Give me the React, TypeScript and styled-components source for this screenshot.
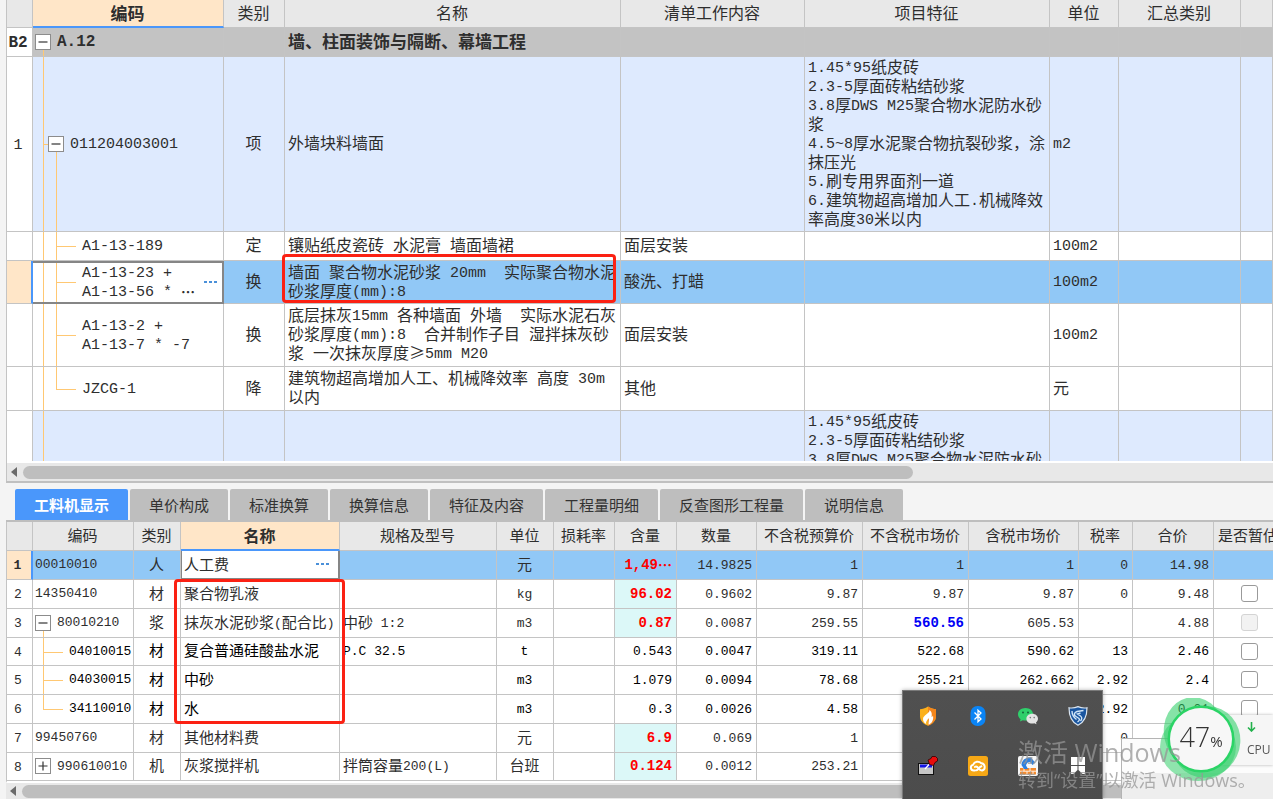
import React from "react";
import styled, { createGlobalStyle, css } from "styled-components";

const CJK = '"Noto Sans CJK SC", sans-serif';
const MONO = '"Liberation Mono", "Noto Sans CJK SC", monospace';
const LINE = "#c4c4c4";
const GUIDE = "#ffc873";
const BLUE = "#4a97fb";
const PICK = "#91c8f6";
const PEACH = "#ffe6c8";
const EDGE = "#868686";

const GlobalStyle = createGlobalStyle`
  * { box-sizing: border-box; }
  body { margin: 0; background: #f4f4f4; color: #2e2e2e; font-family: ${CJK}; overflow: hidden; }
  button, input { font: inherit; color: inherit; margin: 0; }
`;

const Screen = styled.main`
  display: flex;
  flex-direction: column;
  height: 100vh;
  overflow: hidden;
  padding-left: 6px;
`;

const UpperPane = styled.section`
  position: relative;
  flex: 1 1 0;
  min-height: 0;
  display: flex;
  flex-direction: column;
  border-left: 1px solid ${LINE};
`;

const LowerPane = styled.section`
  position: relative;
  flex: none;
  border-top: 2px solid #c0c0c0;
`;

const Clip = styled.div<{ $fill?: boolean }>`
  overflow: hidden;
  background: #fff;
  border-bottom: 2px solid #fff;
  ${(p) => (p.$fill ? "flex: 1 1 0; min-height: 0;" : "border-left: 1px solid " + LINE + ";")}
`;

const Grid = styled.table<{ $size: number; $line: number }>`
  border-collapse: separate;
  border-spacing: 0;
  table-layout: fixed;
  width: 100%;
  font-size: ${(p) => p.$size}px;
  line-height: ${(p) => p.$line}px;
`;

const UpperGrid = styled(Grid)`
  min-width: 1266px;
`;

const LowerGrid = styled(Grid)`
  min-width: 1277px;
  tbody tr {
    height: 29px;
  }
  tbody tr:nth-child(4n) {
    height: 28px;
  }
`;

const Head = styled.th<{ $on?: boolean; $tall?: boolean }>`
  height: ${(p) => (p.$tall ? 29 : 28)}px;
  padding: 0 1px 2px 0;
  background: ${(p) => (p.$on ? PEACH : "#e8e8e8")};
  border-right: 1px solid ${LINE};
  border-bottom: ${(p) => (p.$on ? "2px solid " + BLUE : "1px solid " + LINE)};
  font-weight: ${(p) => (p.$on ? 700 : 400)};
  ${(p) => p.$on && `font-size: ${p.$tall ? 16 : 17}px;`}
  white-space: nowrap;
  overflow: hidden;
`;

type CellProps = {
  $align?: "left" | "center" | "right";
  $bg?: string;
  $bold?: boolean;
  $color?: string;
};

const Cell = styled.td<CellProps>`
  padding: 0 4px 3px 3px;
  text-align: ${(p) => p.$align || "left"};
  background-color: ${(p) => p.$bg || "transparent"};
  border-right: 1px solid ${LINE};
  border-bottom: 1px solid ${LINE};
  white-space: pre;
  ${(p) => p.$bold && "font-weight: 700;"}
  ${(p) => p.$color && `color: ${p.$color};`}
`;

const GroupCell = styled(Cell)`
  font-size: 17px;
  font-weight: 700;
`;

const IndexCell = styled(Cell)<{ $marked?: boolean }>`
  padding: 0 3px 2px 0;
  text-align: center;
  background-color: ${(p) => (p.$marked ? PEACH : "#fff")};
  ${(p) => p.$marked && `border-right: 2px solid ${BLUE};`}
`;

const EditCell = styled(Cell)`
  background-color: #fff;
  border-color: ${EDGE};
  box-shadow: inset 1px -1px 0 ${EDGE}, inset -1px 0 0 ${EDGE};
`;

/* Tree guides are painted as cell backgrounds so they follow the row height. */
const guide = (parts: string[]) => css`
  background-image: ${parts.map(() => `linear-gradient(${GUIDE}, ${GUIDE})`).join(", ")};
  background-position: ${parts.map((p) => p.split("/")[0]).join(", ")};
  background-size: ${parts.map((p) => p.split("/")[1]).join(", ")};
  background-repeat: no-repeat;
  background-origin: border-box;
`;

const guides = {
  none: [] as string[],
  stem: ["10px 100%/1px 50%"],
  section: ["10px 0/1px 100%", "10px 50%/6px 1px", "23px 100%/1px 50%"],
  child: ["10px 0/1px 100%", "23px 0/1px 100%", "23px 50%/20px 1px"],
  last: ["10px 0/1px 100%", "23px 0/1px 50%", "23px 50%/20px 1px"],
  pass: ["10px 0/1px 100%"],
  leaf: ["10px 0/1px 100%", "10px 50%/20px 1px"],
  leafEnd: ["10px 0/1px 50%", "10px 50%/20px 1px"],
};
type GuideKind = keyof typeof guides;

const TreeCell = styled(Cell)<{ $guide: GuideKind; $indent: number }>`
  padding: 0 0 1px ${(p) => p.$indent}px;
  ${(p) => guides[p.$guide].length > 0 && guide(guides[p.$guide])}
`;

const TreeEdit = styled(TreeCell)`
  background-color: #fff;
  border-color: ${EDGE};
  box-shadow: inset 0 2px 0 ${EDGE}, inset -1px -1px 0 ${EDGE};
`;

const Line = styled.div`
  display: flex;
  align-items: center;
`;

const CodeLines = styled.div`
  padding-bottom: 2px;
`;

const Ellipsis = styled.span`
  font-weight: 700;
  font-size: 14px;
  line-height: 1;
`;

const Toggle = styled.button`
  flex: none;
  display: grid;
  place-items: center;
  width: 16px;
  height: 16px;
  margin-right: 6px;
  padding: 0;
  border: 1px solid #8c8c8c;
  background: #fff;
`;

const Latin = styled.span<{ $size: number }>`
  font-family: ${MONO};
  font-size: ${(p) => p.$size}px;
  line-height: 1;
  vertical-align: 1px;
`;

const MoreButton = styled.button`
  display: flex;
  gap: 2px;
  margin-left: auto;
  margin-right: 6px;
  padding: 4px 0;
  border: 0;
  background: none;
`;

const Dot = styled.i`
  width: 3px;
  height: 2px;
  background: #4a90d9;
`;

const Tick = styled.input`
  appearance: none;
  display: block;
  width: 17px;
  height: 17px;
  margin: 2px 0 0 24px;
  border: 1px solid #9a9a9a;
  border-radius: 3px;
  background: #fff;
  &:disabled {
    border-color: #d4d4d4;
    background: #f2f2f2;
  }
`;

const Mark = styled.div`
  position: absolute;
  border: 3px solid #fb2113;
  border-radius: 4px;
  pointer-events: none;
`;

const UpperMark = styled(Mark)`
  left: 275px;
  top: 254px;
  width: 334px;
  height: 49px;
`;

const LowerMark = styled(Mark)`
  left: 168px;
  top: 96px;
  width: 171px;
  height: 145px;
`;

const Track = styled.div<{ $tall?: boolean }>`
  display: flex;
  align-items: center;
  height: ${(p) => (p.$tall ? 18 : 16)}px;
  padding-left: 4px;
  gap: 6px;
  background: #e8e8e8;
`;

const Thumb = styled.div<{ $span: number }>`
  width: ${(p) => p.$span}%;
  height: 13px;
  border-radius: 7px;
  background: #bebebe;
`;

const Tabs = styled.div`
  display: flex;
  gap: 2px;
  padding: 6px 0 0 9px;
  border-bottom: 2px solid #bebebe;
`;

const Tab = styled.button<{ $on?: boolean }>`
  height: 31px;
  padding: 0 19px;
  border: 0;
  border-radius: 2px 2px 0 0;
  background: ${(p) => (p.$on ? BLUE : "#bebebe")};
  color: ${(p) => (p.$on ? "#fff" : "#333")};
  font-size: 15px;
  font-weight: ${(p) => (p.$on ? 700 : 400)};
  line-height: 20px;
  white-space: nowrap;
`;

const Tray = styled.div`
  position: fixed;
  right: 170px;
  bottom: 0;
  display: grid;
  grid-template-columns: repeat(4, 50px);
  grid-auto-rows: 50px;
  place-items: center;
  width: 201px;
  height: 109px;
  border: 1px solid #7a7a7a;
  border-bottom: 0;
  background: linear-gradient(#505050, #4c4c4c);
  box-shadow: 0 0 4px rgba(0, 0, 0, 0.3);
`;

const Popup = styled.div`
  position: fixed;
  right: 0;
  bottom: 0;
  width: 152px;
  height: 61px;
  border: 1px solid #b4b4b4;
  border-width: 1px 0 0 1px;
  background: linear-gradient(#fcfcfc 0 34px, #eeeeee 34px);
`;

const Meter = styled.div`
  position: fixed;
  right: 0;
  bottom: 34px;
  width: 72px;
  height: 50px;
  display: flex;
  flex-direction: column;
  align-items: flex-start;
  gap: 10px;
  padding: 7px 2px 0 46px;
  background: #f6f6f6;
  box-shadow: 0 0 3px rgba(0, 0, 0, 0.3);
  font: 12px/16px "Open Sans", sans-serif;
  color: #555;
`;

const Ball = styled.div`
  position: fixed;
  right: 31px;
  bottom: 19px;
  width: 82px;
  height: 82px;
`;

const BallText = styled.div`
  position: absolute;
  inset: 0;
  display: flex;
  align-items: baseline;
  justify-content: center;
  font: 300 27px/78px "Open Sans", sans-serif;
  color: #333;
`;

const Percent = styled.span`
  font-size: 15px;
  font-weight: 400;
`;

const Watermark = styled.div`
  position: fixed;
  right: 13px;
  bottom: 6px;
  width: 242px;
  color: rgba(150, 150, 150, 0.75);
  white-space: nowrap;
  pointer-events: none;
`;

const WatermarkTitle = styled.div`
  font: 25px/32px "Open Sans", "Noto Sans CJK SC", sans-serif;
`;

const WatermarkNote = styled.div`
  font: 18px/25px "Open Sans", "Noto Sans CJK SC", sans-serif;
`;

/** Chinese text with its half-width runs set in the grid's monospace face. */
function Mixed({ text, size = 15 }: { text: string; size?: number }) {
  return (
    <>
      {text.split(/([\x20-\x7e]+|⋯)/).map((run, i) =>
        run === "⋯" ? (
          <Ellipsis key={i}>{run}</Ellipsis>
        ) : i % 2 ? (
          <Latin key={i} $size={size}>
            {run}
          </Latin>
        ) : (
          run
        )
      )}
    </>
  );
}

function Expander({ open }: { open: boolean }) {
  return (
    <Toggle type="button" aria-label={open ? "折叠" : "展开"}>
      <svg width="10" height="10" viewBox="0 0 10 10" stroke="#333" strokeWidth="1.2">
        <path d={open ? "M0.5 5H9.5" : "M0.5 5H9.5M5 0.5V9.5"} />
      </svg>
    </Toggle>
  );
}

function More() {
  return (
    <MoreButton type="button" aria-label="更多">
      <Dot />
      <Dot />
      <Dot />
    </MoreButton>
  );
}

function ScrollBar({ span, tall }: { span: number; tall?: boolean }) {
  return (
    <Track $tall={tall}>
      <svg width="6" height="10" viewBox="0 0 6 10">
        <path d="M6 0V10L0 5Z" fill="#6b6b6b" />
      </svg>
      <Thumb $span={span} />
    </Track>
  );
}

type Item = {
  no?: string;
  code: string;
  kind: string;
  name: string;
  work?: string;
  feature?: string;
  unit?: string;
  height: number;
  guide: GuideKind;
  indent: number;
  tone?: "group" | "section" | "picked";
};

const feature =
  "1.45*95纸皮砖\n2.3-5厚面砖粘结砂浆\n3.8厚DWS M25聚合物水泥防水砂\n浆\n4.5~8厚水泥聚合物抗裂砂浆，涂\n抹压光\n5.刷专用界面剂一道\n6.建筑物超高增加人工.机械降效\n率高度30米以内";

const items: Item[] = [
  { no: "B2", code: "A.12", kind: "", name: "墙、柱面装饰与隔断、幕墙工程", height: 29, guide: "stem", indent: 2, tone: "group" },
  { no: "1", code: "011204003001", kind: "项", name: "外墙块料墙面", feature, unit: "m2", height: 175, guide: "section", indent: 15, tone: "section" },
  { code: "A1-13-189", kind: "定", name: "镶贴纸皮瓷砖 水泥膏 墙面墙裙", work: "面层安装", unit: "100m2", height: 29, guide: "child", indent: 49 },
  { code: "A1-13-23 +\nA1-13-56 * ⋯", kind: "换", name: "墙面 聚合物水泥砂浆 20mm  实际聚合物水泥\n砂浆厚度(mm):8", work: "酸洗、打蜡", unit: "100m2", height: 43, guide: "child", indent: 49, tone: "picked" },
  { code: "A1-13-2 +\nA1-13-7 * -7", kind: "换", name: "底层抹灰15mm 各种墙面 外墙  实际水泥石灰\n砂浆厚度(mm):8  合并制作子目 湿拌抹灰砂\n浆 一次抹灰厚度≥5mm M20", work: "面层安装", unit: "100m2", height: 63, guide: "child", indent: 49 },
  { code: "JZCG-1", kind: "降", name: "建筑物超高增加人工、机械降效率 高度 30m\n以内", work: "其他", unit: "元", height: 44, guide: "last", indent: 49 },
  { code: "", kind: "", name: "", feature, height: 175, guide: "pass", indent: 0, tone: "section" },
];

const tones = { group: "#c3c3c3", section: "#deeafe", picked: PICK };

const UpperRow = styled.tr<{ $h: number }>`
  height: ${(p) => p.$h}px;
`;

function ItemRow({ item }: { item: Item }) {
  const bg = item.tone ? tones[item.tone] : "#fff";
  const bold = item.tone === "group";
  const picked = item.tone === "picked";
  const Code = picked ? TreeEdit : TreeCell;
  const Name = bold ? GroupCell : Cell;
  const foldable = bold || (item.tone === "section" && !!item.code);
  const latin = bold ? 16 : 15;
  return (
    <UpperRow $h={item.height}>
      <IndexCell $marked={picked} $bold={bold}>
        <Mixed text={item.no || ""} size={latin} />
      </IndexCell>
      <Code $bg={bg} $guide={item.guide} $indent={item.indent} $bold={bold}>
        <Line>
          {foldable && <Expander open />}
          <CodeLines>
            {item.code.split("\n").map((line, i) => (
              <div key={i}>
                <Mixed text={line} size={latin} />
              </div>
            ))}
          </CodeLines>
          {picked && <More />}
        </Line>
      </Code>
      <Cell $bg={bg} $align="center">
        {item.kind}
      </Cell>
      <Name $bg={bg}>
        <Mixed text={item.name} />
      </Name>
      <Cell $bg={bg}>{item.work}</Cell>
      <Cell $bg={bg}>
        <Mixed text={item.feature || ""} />
      </Cell>
      <Cell $bg={bg}>
        <Mixed text={item.unit || ""} />
      </Cell>
      <Cell $bg={bg} />
      <Cell $bg={bg} />
    </UpperRow>
  );
}

type Part = {
  code: string;
  kind: string;
  name: string;
  spec?: string;
  unit: string;
  amount: string;
  hot?: boolean;
  values: string[];
  guide?: GuideKind;
  fold?: "open" | "closed";
  check?: "off" | "disabled";
};

const parts: Part[] = [
  { code: "00010010", kind: "人", name: "人工费", unit: "元", amount: "1,49⋯", hot: true, values: ["14.9825", "1", "1", "1", "0", "14.98"] },
  { code: "14350410", kind: "材", name: "聚合物乳液", unit: "kg", amount: "96.02", hot: true, values: ["0.9602", "9.87", "9.87", "9.87", "0", "9.48"], check: "off" },
  { code: "80010210", kind: "浆", name: "抹灰水泥砂浆(配合比)", spec: "中砂 1:2", unit: "m3", amount: "0.87", hot: true, values: ["0.0087", "259.55", "560.56", "605.53", "", "4.88"], guide: "stem", fold: "open", check: "disabled" },
  { code: "04010015", kind: "材", name: "复合普通硅酸盐水泥", spec: "P.C 32.5", unit: "t", amount: "0.543", values: ["0.0047", "319.11", "522.68", "590.62", "13", "2.46"], guide: "leaf", check: "off" },
  { code: "04030015", kind: "材", name: "中砂", unit: "m3", amount: "1.079", values: ["0.0094", "78.68", "255.21", "262.662", "2.92", "2.4"], guide: "leaf", check: "off" },
  { code: "34110010", kind: "材", name: "水", unit: "m3", amount: "0.3", values: ["0.0026", "4.58", "", "", "2.92", "0.01"], guide: "leafEnd", check: "off" },
  { code: "99450760", kind: "材", name: "其他材料费", unit: "元", amount: "6.9", hot: true, values: ["0.069", "1", "", "", "0", ""] },
  { code: "990610010", kind: "机", name: "灰浆搅拌机", spec: "拌筒容量200(L)", unit: "台班", amount: "0.124", hot: true, values: ["0.0012", "253.21", "", "", "", ""], fold: "closed" },
];

function PartRow({ part, no }: { part: Part; no: number }) {
  const picked = no === 1;
  const bg = picked ? PICK : "#fff";
  const nested = part.guide === "leaf" || part.guide === "leafEnd";
  const ink = nested ? "#000" : undefined;
  const Name = picked ? EditCell : Cell;
  return (
    <tr>
      <IndexCell $marked={picked} $bold={picked}>
        <Latin $size={13}>{no}</Latin>
      </IndexCell>
      <TreeCell $bg={bg} $guide={part.guide || "none"} $indent={nested ? 36 : 2} $color={ink}>
        <Line>
          {part.fold && <Expander open={part.fold === "open"} />}
          <Latin $size={13}>{part.code}</Latin>
        </Line>
      </TreeCell>
      <Cell $bg={bg} $align="center" $color={ink}>
        {part.kind}
      </Cell>
      <Name $bg={bg} $color={ink}>
        {picked ? (
          <Line>
            {part.name}
            <More />
          </Line>
        ) : (
          <Mixed text={part.name} size={13} />
        )}
      </Name>
      <Cell $bg={bg} $color={ink}>
        <Mixed text={part.spec || ""} size={13} />
      </Cell>
      <Cell $bg={bg} $align="center" $color={ink}>
        <Mixed text={part.unit} size={13} />
      </Cell>
      <Cell $bg={bg} />
      <Cell
        $bg={part.hot && !picked ? "#dcf8f8" : bg}
        $align="right"
        $bold={part.hot}
        $color={part.hot ? "#ff0000" : ink}
      >
        <Mixed text={part.amount} size={part.hot ? 14 : 13} />
      </Cell>
      {part.values.map((value, i) => {
        const edited = value === "560.56";
        return (
          <Cell key={i} $bg={bg} $align="right" $bold={edited} $color={edited ? "#0000f5" : ink}>
            <Latin $size={edited ? 14 : 13}>{value}</Latin>
          </Cell>
        );
      })}
      <Cell $bg={bg}>
        {part.check && <Tick type="checkbox" aria-label="是否暂估" disabled={part.check === "disabled"} />}
      </Cell>
    </tr>
  );
}

const upperCols: [string, number | undefined][] = [
  ["", 26], ["编码", 191], ["类别", 61], ["名称", 336], ["清单工作内容", 184],
  ["项目特征", 245], ["单位", 69], ["汇总类别", 122], ["", undefined],
];

const lowerCols: [string, number | undefined][] = [
  ["", 26], ["编码", 101], ["类别", 47], ["名称", 159], ["规格及型号", 157], ["单位", 57],
  ["损耗率", 61], ["含量", 62], ["数量", 80], ["不含税预算价", 106], ["不含税市场价", 106],
  ["含税市场价", 110], ["税率", 54], ["合价", 81], ["是否暂估", undefined],
];

const tabs = ["工料机显示", "单价构成", "标准换算", "换算信息", "特征及内容", "工程量明细", "反查图形工程量", "说明信息"];

function Columns({ cols, active, tall }: { cols: [string, number | undefined][]; active: string; tall?: boolean }) {
  return (
    <>
      <colgroup>
        {cols.map(([, w], i) => (
          <col key={i} width={w} />
        ))}
      </colgroup>
      <thead>
        <tr>
          {cols.map(([label], i) => (
            <Head key={i} scope="col" $on={label === active} $tall={tall}>
              {label}
            </Head>
          ))}
        </tr>
      </thead>
    </>
  );
}

function TrayIcons() {
  return (
    <Tray>
      <svg width="18" height="20" viewBox="0 0 18 20">
        <path d="M9 0.5C6 2.5 3.5 3 1 3.2V10C1 15 4.5 18 9 19.7C13.5 18 17 15 17 10V3.2C14.5 3 12 2.5 9 0.5Z" fill="#fbb01c" />
        <path d="M9 0.5C12 2.5 14.5 3 17 3.2V10C17 15 13.5 18 9 19.7Z" fill="#f4861c" />
        <path d="M10.5 4C11 7.5 4 9 4 13C4 15.5 5.5 17.2 7.3 18C6.3 15.3 9 13.8 9.5 12C10.5 14 9.3 16 9.5 18.8C13 17.3 14.8 14 14 9.5C13.5 10.5 13 11 12.6 11C13 8 13 5.8 10.5 4Z" fill="#fff" />
      </svg>
      <svg width="16" height="20" viewBox="0 0 16 20">
        <rect x="0.5" width="15" height="20" rx="7" fill="#0a84f5" />
        <path d="M4.5 6.5L11 13L8 15.8V4.2L11 7L4.5 13.5" fill="none" stroke="#fff" strokeWidth="1.3" />
      </svg>
      <svg width="22" height="18" viewBox="0 0 22 18">
        <path d="M8.5 1C4 1 1 3.8 1 7.3C1 9.3 2 11 3.6 12.2L3 14.5L5.8 13.2C6.7 13.5 7.6 13.6 8.5 13.6C13 13.6 16 10.8 16 7.3C16 3.8 13 1 8.5 1Z" fill="#2fcf6b" />
        <circle cx="6" cy="5.5" r="1" fill="#14653a" />
        <circle cx="11" cy="5.5" r="1" fill="#14653a" />
        <path d="M15.2 6.8C11.8 6.8 9.4 9 9.4 11.7C9.4 14.4 11.8 16.5 15.2 16.5C15.9 16.5 16.6 16.4 17.3 16.2L19.5 17.3L19 15.4C20.2 14.5 21 13.2 21 11.7C21 9 18.6 6.8 15.2 6.8Z" fill="#e4e4e4" />
        <circle cx="13.3" cy="10.6" r="0.8" fill="#777" />
        <circle cx="17.2" cy="10.6" r="0.8" fill="#777" />
      </svg>
      <svg width="20" height="20" viewBox="0 0 20 20">
        <path d="M10 0.6C7 2 4 2.3 1 1.8C1 9 3 16 10 19.3C17 16 19 9 19 1.8C16 2.3 13 2 10 0.6Z" fill="#1a56a0" stroke="#dce6f0" strokeWidth="1.2" />
        <path d="M15.5 4.5L9 5.5C6 6.500 5.500 9 8 10.500L11 12.500C12 13.500 11 15 9.500 16M12.500 7L9.500 8L12.500 10C14.500 11.500 13.800 13.500 12.500 15M4 5C4 8 5 11 8.500 13.500" fill="none" stroke="#cfe4f7" strokeWidth="1.4" />
      </svg>
      <svg width="20" height="20" viewBox="0 0 20 20">
        <rect x="0.5" y="7.5" width="15" height="11" fill="#c6c6c6" stroke="#111" />
        <rect x="2" y="8.5" width="12" height="3" fill="#1414e6" />
        <path d="M7 13L11 8.5" stroke="#fff" strokeWidth="1.3" />
        <path d="M10 4L13 2.5L14 0.5H17.5L19.5 2.5V5L17 6.5L15.5 9.5L11.5 8.5Z" fill="#e80d0d" stroke="#300" strokeWidth="0.8" />
      </svg>
      <svg width="20" height="20" viewBox="0 0 20 20">
        <rect width="20" height="20" rx="2.5" fill="#f6a816" />
        <path d="M7 14.5H5.8A2.9 2.9 0 0 1 5 8.8A5 5 0 0 1 13.3 7.3A3.7 3.7 0 0 1 14.2 14.5C12.5 14.7 11.5 13.8 10.5 12.3C9.5 10.8 8 10.2 6.8 11M8.5 14.3C10.5 14 10.5 11 13.5 10.3" fill="none" stroke="#fff" strokeWidth="1.9" strokeLinecap="round" />
      </svg>
      <svg width="20" height="20" viewBox="0 0 20 20">
        <rect width="20" height="20" rx="2" fill="#f7f7f7" />
        <path d="M2 12H18V18.5H2Z" fill="#f58a2c" />
        <path d="M2 15.2H18M6 12V15M12 12V15M9 15.5V18.5M15 15.5V18.5" stroke="#fff" strokeWidth="0.9" />
        <path d="M13 1.5C8 1 3.5 4 3.5 9L6 13H10L8 9.5C8.5 7 10 6 12 6L14.5 9L17 6.5Z" fill="#2c7fe0" />
      </svg>
      <svg width="14" height="18" viewBox="0 0 14 18" fill="#fff">
        <path d="M0 0H6.5V8H0ZM7.5 0H14V8H7.5ZM0 9H6.5V13L2.5 17H0ZM7.5 9H14V17H11.5L7.5 13Z" />
      </svg>
    </Tray>
  );
}

export default function App() {
  return (
    <>
      <GlobalStyle />
      <Screen lang="zh-CN">
        <UpperPane>
          <Clip $fill>
            <UpperGrid $size={16} $line={19}>
              <Columns cols={upperCols} active="编码" />
              <tbody>
                {items.map((item, i) => (
                  <ItemRow key={i} item={item} />
                ))}
              </tbody>
            </UpperGrid>
          </Clip>
          <ScrollBar tall span={70.5} />
          <UpperMark />
        </UpperPane>
        <LowerPane>
          <Tabs role="tablist">
            {tabs.map((label, i) => (
              <Tab key={label} type="button" role="tab" aria-selected={i === 0} $on={i === 0}>
                {label}
              </Tab>
            ))}
          </Tabs>
          <Clip>
            <LowerGrid $size={15} $line={20}>
              <Columns cols={lowerCols} active="名称" tall />
              <tbody>
                {parts.map((part, i) => (
                  <PartRow key={part.code} part={part} no={i + 1} />
                ))}
              </tbody>
            </LowerGrid>
          </Clip>
          <ScrollBar span={92} />
          <LowerMark />
        </LowerPane>
      </Screen>
      <TrayIcons />
      <Popup />
      <Meter>
        <svg width="9" height="10" viewBox="0 0 9 10" fill="none" stroke="#22b14c" strokeWidth="1.6">
          <path d="M4.5 0V9M1 5.5L4.5 9L8 5.5" />
        </svg>
        CPU
      </Meter>
      <Ball>
        <svg width="82" height="86" viewBox="0 0 82 86">
          <g fill="#35d06c">
            <ellipse cx="35" cy="35" rx="31" ry="36" opacity="0.6" transform="rotate(-12 35 35)" />
            <ellipse cx="46" cy="44" rx="34" ry="36" opacity="0.6" transform="rotate(25 46 44)" />
            <ellipse cx="38" cy="49" rx="38" ry="34" opacity="0.55" />
          </g>
          <circle cx="41" cy="41" r="32" fill="none" stroke="#2bd466" strokeWidth="3" />
          <circle cx="41" cy="41" r="31" fill="#f7f7f7" />
        </svg>
        <BallText>
          47<Percent>%</Percent>
        </BallText>
      </Ball>
      <Watermark>
        <WatermarkTitle>激活 Windows</WatermarkTitle>
        <WatermarkNote>转到“设置”以激活 Windows。</WatermarkNote>
      </Watermark>
    </>
  );
}
